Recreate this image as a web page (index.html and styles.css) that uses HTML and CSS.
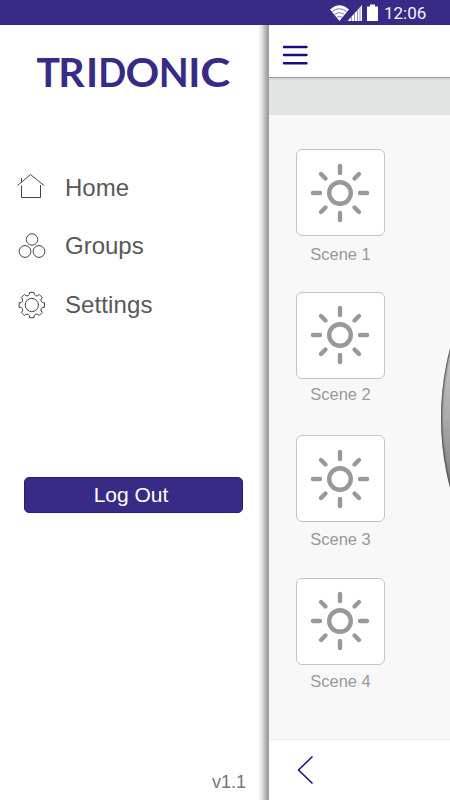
FILE: index.html
```html
<!DOCTYPE html>
<html lang="en">
<head>
<meta charset="utf-8">
<title>Tridonic</title>
<link rel="stylesheet" href="styles.css">
</head>
<body>
<svg class="defs" aria-hidden="true">
  <symbol id="sun" viewBox="-30 -30 60 60">
    <g fill="none" stroke="#999" stroke-width="4.4" stroke-linecap="round">
      <circle r="10.8" stroke-width="4.4"/>
      <path d="M0-27v7M0 20v7M-27 0h7M20 0h7M-19-19l4.5 4.5M14.5 14.5l4.5 4.5M19-19l-4.5 4.5M-14.5 14.5l-4.500 4.500"/>
    </g>
  </symbol>
</svg>
<header class="status">
  <svg class="signals" width="50" height="18" viewBox="0 0 50 18">
    <path d="M0 5.500Q9.500-3 19 5.500L9.500 17z" fill="#fff"/>
    <path d="M2.300 7.500Q9.500 2 16.700 7.500M4.600 10.500Q9.500 6.800 14.400 10.500M7 13.300Q9.500 11.500 12 13.300" fill="none" stroke="#7a6fb2" stroke-width="1"/>
    <path d="M17.500 17L32 1V17z" fill="#fff"/>
    <path d="M21.500 12v5M24.500 9v8M27.500 6v11M30 3v14" stroke="#8177b5" stroke-width=".8"/>
    <path d="M37 2.500h3V.5h5V2.500h3v14.500H37z" fill="#fff"/>
  </svg>
  <span class="time">12:06</span>
</header>
<div class="screen">
  <aside class="drawer">
    <svg class="logo" width="196" height="34" viewBox="0 0 196 34"><text y="30"><tspan x="0.500" textLength="23.500" lengthAdjust="spacingAndGlyphs">T</tspan><tspan x="22.300">R</tspan><tspan x="50">I</tspan><tspan x="62.300" textLength="28" lengthAdjust="spacingAndGlyphs">D</tspan><tspan x="89.600" textLength="33.800" lengthAdjust="spacingAndGlyphs">O</tspan><tspan x="122.800" textLength="30" lengthAdjust="spacingAndGlyphs">N</tspan><tspan x="152.300">I</tspan><tspan x="164.300" textLength="30" lengthAdjust="spacingAndGlyphs">C</tspan></text></svg>
    <nav class="menu">
      <a class="item"><svg width="30" height="30" viewBox="0 0 30 30"><path d="M1.500 13.500L14.500 2.500L28 13.500M5.500 10.500V6M5.500 13.500V25.500H24.500V13"/></svg><span class="home">Home</span></a>
      <a class="item"><svg width="30" height="30" viewBox="0 0 30 30"><circle cx="16" cy="8.500" r="5.700"/><circle cx="9" cy="20.500" r="5.900"/><circle cx="23" cy="20.500" r="5.900"/></svg><span class="groups">Groups</span></a>
      <a class="item"><svg width="30" height="30" viewBox="0 0 30 30"><circle cx="15.800" cy="15" r="6.600"/><path id="gear" d=""/></svg><span class="settings">Settings</span></a>
    </nav>
    <button class="logout">Log Out</button>
    <p class="version">v1.1</p>
  </aside>
  <main class="panel">
    <div class="topbar"><svg width="26" height="22" viewBox="0 0 26 22"><path d="M2 3h22.500M2 11h22.500M2 19.300h22.500" stroke="#180b86" stroke-width="2.400" stroke-linecap="round"/></svg></div>
    <div class="band"></div>
    <div class="content">
      <div class="scene s1"><div class="card"><svg width="60" height="60"><use href="#sun"/></svg></div><span>Scene 1</span></div>
      <div class="scene s2"><div class="card"><svg width="60" height="60"><use href="#sun"/></svg></div><span>Scene 2</span></div>
      <div class="scene s3"><div class="card"><svg width="60" height="60"><use href="#sun"/></svg></div><span>Scene 3</span></div>
      <div class="scene s4"><div class="card"><svg width="60" height="60"><use href="#sun"/></svg></div><span>Scene 4</span></div>
      <div class="dial"></div>
    </div>
    <footer class="bottombar"><svg width="18" height="30" viewBox="0 0 18 30"><path d="M15.500 1.500L1.500 15L15.500 28.500" fill="none" stroke="#180b86" stroke-width="1.500"/></svg></footer>
  </main>
</div>
<script src="gear.js"></script>
</body>
</html>
```
FILE: gear.js
```js
// Builds the outline of the eight-toothed settings gear, with rounded valleys.
const polar = (degrees, radius) => {
  const angle = degrees * Math.PI / 180;
  return (15.8 + radius * Math.cos(angle)).toFixed(2) + " " + (15 + radius * Math.sin(angle)).toFixed(2);
};
let outline = "";
for (let i = 0; i < 8; i++) {
  const a = i * 45;
  outline += (i ? "L" : "M") + polar(a - 10, 12.9) + "L" + polar(a + 10, 12.9) +
    "L" + polar(a + 12, 11) + "Q" + polar(a + 22.5, 9.2) + " " + polar(a + 33, 11);
}
document.getElementById("gear").setAttribute("d", outline + "Z");
```
FILE: styles.css
```css
* { box-sizing: border-box; }
body { margin: 0; width: 450px; height: 800px; overflow: hidden; background: #fff; font-family: "Liberation Sans", Arial, sans-serif; }
.defs { position: absolute; width: 0; height: 0; }
.status { height: 25px; background: #372b85; display: flex; justify-content: flex-end; padding: 4px 24px 0 0; }
.signals { margin-right: 4px; }
.time { width: 42px; margin-top: -1px; font: 17px/20px Roboto, sans-serif; color: #f4f2fa; white-space: nowrap; }
.screen { display: flex; height: 775px; }
.drawer { width: 269px; flex: none; display: flex; flex-direction: column; background: linear-gradient(to left, #969696 0, #b0b0b0 3px, #e0e0e0 7px, #fff 11px); }
.logo { margin: 32px 0 0 36px; overflow: visible; font: 700 41px Lato, sans-serif; fill: #372b85; }
.menu { margin-top: 81px; }
.item { display: flex; height: 59px; padding-left: 16px; align-items: flex-start; color: #585858; font-size: 24px; line-height: 30px; }
.item svg { margin-right: 19px; fill: none; stroke: #444; stroke-width: 1; }
.home { margin-top: 1px; }
.settings { letter-spacing: .1px; }
.logout { flex: none; width: 219px; height: 36px; margin: 128px 0 0 24px; padding: 0 5px 0 0; border: 1px solid #2a1c86; border-radius: 5px; background: #372b85; color: #fff; font: 21px/32px "Liberation Sans", Arial, sans-serif; }
.version { margin: auto 23px 7px 0; text-align: right; color: #777; font-size: 18px; line-height: 22px; }
.panel { flex: 1; display: flex; flex-direction: column; min-width: 0; background: #f8f8f8; }
.topbar { height: 53px; padding: 19px 0 0 13px; background: #fff; border-bottom: 1px solid #999; }
.band { height: 37px; background: linear-gradient(#d0d2d1, #e1e4e3 3px); }
.content { height: 624px; position: relative; overflow: hidden; padding: 34px 0 0 27px; }
.scene { width: 89px; height: 143px; text-align: center; color: #999; font-size: 16.500px; line-height: 20px; }
.card { height: 87px; margin-bottom: 8px; padding: 13px 0 0 13px; border: 1px solid #c4c4c4; border-radius: 6px; background: #fff; }
.card svg { display: block; }
.s2 .card, .s4 .card { padding-top: 12px; }
.s2 .card { margin-bottom: 5px; }
.s3 .card { margin-bottom: 7px; }
.s4 .card { margin-bottom: 6px; }
.dial { position: absolute; left: 172px; top: 30px; width: 546px; height: 546px; border-radius: 50%; background: linear-gradient(#d0d0d0 32%, #aaa 50%, #777 66%); box-shadow: inset 1px 0 2px #444; }
.bottombar { height: 61px; padding: 15px 0 0 28px; background: #fff; border-top: 1px solid #eee; }
```
